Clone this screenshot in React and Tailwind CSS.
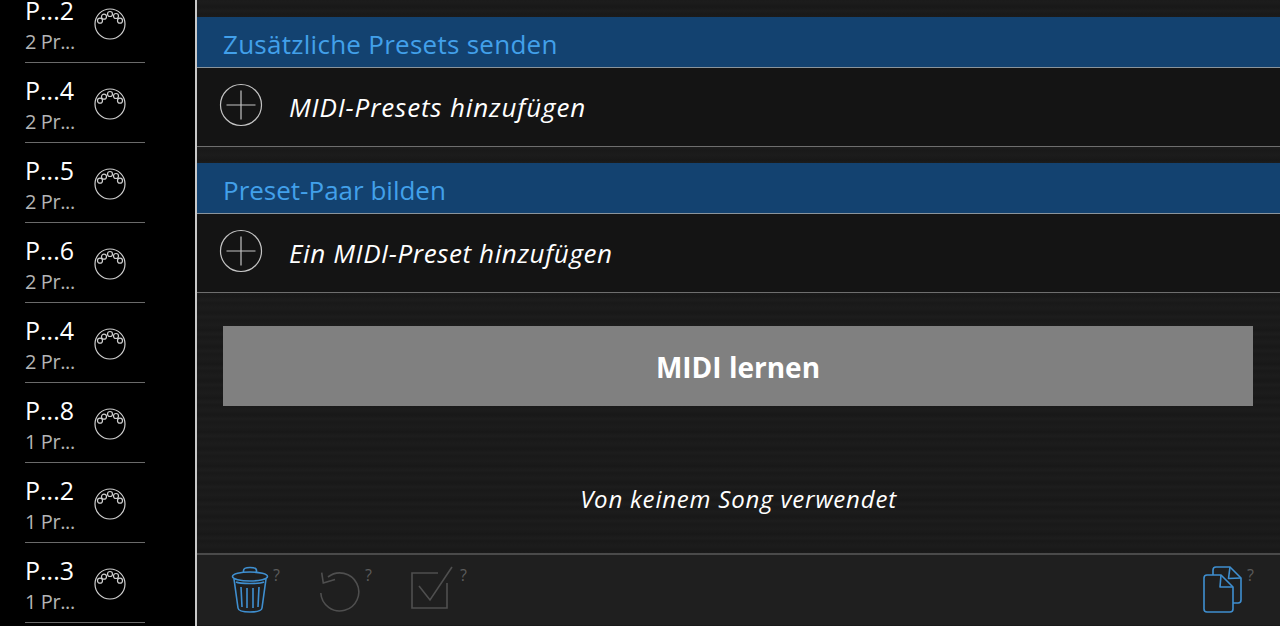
import React from 'react';

const presets = [
  ['P...2', '2 Pr...'],
  ['P...4', '2 Pr...'],
  ['P...5', '2 Pr...'],
  ['P...6', '2 Pr...'],
  ['P...4', '2 Pr...'],
  ['P...8', '1 Pr...'],
  ['P...2', '1 Pr...'],
  ['P...3', '1 Pr...'],
];

const MidiIcon = () => (
  <svg width="34" height="34" viewBox="0 0 34 34" fill="none" stroke="#cfcfcf" strokeWidth="1.2">
    <circle cx="17" cy="17" r="15" />
    <circle cx="7" cy="13.7" r="2.5" />
    <circle cx="11" cy="9.7" r="2.5" />
    <circle cx="17" cy="7" r="2.5" />
    <circle cx="23" cy="9" r="2.5" />
    <circle cx="27" cy="13.7" r="2.5" />
  </svg>
);

const PlusIcon = () => (
  <svg className="-mt-[4px]" width="44" height="44" viewBox="0 0 44 44" fill="none" stroke="#c4c4c4" strokeWidth="1.2">
    <circle cx="22" cy="22" r="20.5" />
    <path d="M22 7.5v29M7.5 22h29" />
  </svg>
);

const Help = ({ className }) => (
  <span className={`text-[16px] leading-none text-[#5c5c5c] ${className}`}>?</span>
);

const TrashIcon = () => (
  <svg width="38" height="48" viewBox="0 0 38 48" fill="none" stroke="#3f8fd0" strokeWidth="1.6" strokeLinejoin="round">
    <path d="M12.500 7V4.500C12.500 2.500 15 1.500 19 1.500s6.500 1 6.500 3V7" />
    <ellipse cx="19" cy="10.500" rx="17.500" ry="4.500" />
    <path d="M3 13 7 42c.3 2.500 5.500 4 12 4s11.700-1.500 12-4L35 13" />
    <path d="M5 16c4 2 24 2 28 0" />
    <path d="M10 21l1 20M16 22v20M22 22v20M28 21l-1 20" />
  </svg>
);

const UndoIcon = () => (
  <svg width="42" height="44" viewBox="0 0 42 44" fill="none" stroke="#4f4f4f" strokeWidth="1.6">
    <path d="M9 8A19 19 0 1 1 1.800 24" />
    <path d="M2.700 3.700 4.300 14 16 10.500" />
  </svg>
);

const CheckIcon = () => (
  <svg width="42" height="44" viewBox="0 0 42 44" fill="none" stroke="#4f4f4f" strokeWidth="1.6">
    <path d="M27 7H1v35h35V17" />
    <path d="M8 20 19 34 41 1" />
  </svg>
);

const CopyIcon = () => (
  <svg width="40" height="48" viewBox="0 0 40 48" fill="none" stroke="#3f8fd0" strokeWidth="1.6" strokeLinejoin="round">
    <path d="M10 9V4C10 2 11 1 13 1h14l11 11v22c0 2-1 3-3 3h-5" />
    <path d="M27 1 25.500 12.500 38 12" />
    <path d="M4 9h14l12 12v22c0 2-1 3-3 3H4c-2 0-3-1-3-3V12c0-2 1-3 3-3Z" />
    <path d="M18 9 17 21 30 21" />
  </svg>
);

const Section = ({ title, label, titleTracking, labelTracking }) => (
  <section>
    <h2 className={`flex h-[51px] items-end border-b border-[#8a949c] bg-[#134270] pb-[8px] pl-[26px] text-[26px] leading-[30px] font-medium text-[#42a0ea] ${titleTracking}`}>
      {title}
    </h2>
    <div className="flex h-[79px] items-center border-b border-[#6e6e6e] bg-[#141414] pl-[22px]">
      <PlusIcon />
      <span className={`ml-[26px] text-[26px] leading-none font-medium text-white italic ${labelTracking}`}>{label}</span>
    </div>
  </section>
);

export default function App() {
  return (
    <div className="flex h-[626px] w-[1280px] overflow-hidden bg-black font-['Open_Sans',sans-serif]">
      <aside className="h-full w-[195px] shrink-0 overflow-hidden bg-black">
        <div className="-mt-[17px]">
          {presets.map(([name, count], i) => (
            <div key={i} className="ml-[25px] flex h-[80px] w-[120px] items-center border-b border-[#6a6a6a]">
              <div className="w-[68px] pt-[1px]">
                <div className="text-[25px] leading-[30px] font-medium text-white">{name}</div>
                <div className="mt-[7px] text-[20px] leading-[20px] font-medium tracking-[-0.4px] text-[#b4b4b4]">{count}</div>
              </div>
              <div className="mt-[2px]"><MidiIcon /></div>
            </div>
          ))}
        </div>
      </aside>
      <main className="flex h-full flex-1 flex-col border-l-2 border-[#c8c8c8] bg-[#1a1a1a] bg-[repeating-linear-gradient(0deg,#191919_0px,#1d1d1d_3px,#181818_7px,#1c1c1c_12px,#191919_17px)]">
        <div className="flex flex-col gap-[16px] pt-[17px]">
          <Section
            title="Zusätzliche Presets senden"
            label="MIDI-Presets hinzufügen"
            titleTracking="tracking-[0.27px]"
            labelTracking="tracking-[0.85px]"
          />
          <Section
            title="Preset-Paar bilden"
            label="Ein MIDI-Preset hinzufügen"
            titleTracking="tracking-[0px]"
            labelTracking="tracking-[0.6px]"
          />
        </div>
        <div className="mt-[33px] pr-[27px] pl-[26px]">
          <button className="flex h-[80px] w-full items-center justify-center bg-[#808080] pt-[1px] text-[28px] font-bold text-white">
            MIDI lernen
          </button>
        </div>
        <p className="mt-[75px] text-center text-[24px] leading-[36px] font-medium tracking-[0.8px] text-white italic">
          Von keinem Song verwendet
        </p>
        <footer className="mt-[36px] flex h-[72px] items-start justify-between border-t-2 border-[#4a4a4a] bg-[#1f1f1f] pt-[11px] pr-[26px] pl-[34px]">
          <div className="flex">
            <div className="flex w-[88px] items-start">
              <TrashIcon />
              <Help className="mt-[1px] ml-[4px]" />
            </div>
            <div className="mt-[3px] flex w-[92px] items-start">
              <UndoIcon />
              <Help className="-mt-[2px] ml-[4px]" />
            </div>
            <div className="flex items-start">
              <CheckIcon />
              <Help className="mt-[1px] ml-[7px]" />
            </div>
          </div>
          <div className="flex items-start">
            <CopyIcon />
            <Help className="mt-[1px] ml-[4px]" />
          </div>
        </footer>
      </main>
    </div>
  );
}
